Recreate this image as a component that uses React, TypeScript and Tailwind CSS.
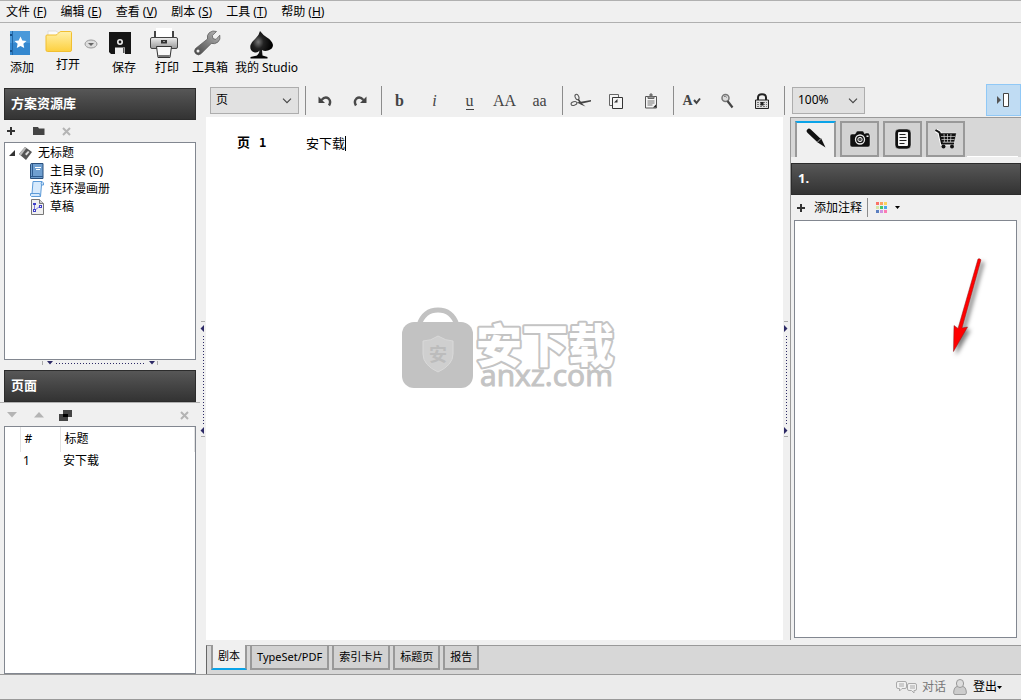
import type { ReactNode } from "react";

const menus = [
    { label: "文件", key: "F" },
    { label: "编辑", key: "E" },
    { label: "查看", key: "V" },
    { label: "剧本", key: "S" },
    { label: "工具", key: "T" },
    { label: "帮助", key: "H" },
];

const views = ["TypeSet/PDF", "索引卡片", "标题页", "报告"];

const swatches = [
    "#fb7268", "#fba35f", "#fbd45f",
    "#d3e6a6", "#45c768", "#4aa6ea",
    "#5b7fc0", "#cf94e2", "#fb7bb4",
];

function BookIcon() {
    return (
        <svg width="22" height="26" viewBox="0 0 22 26">
            <rect x="1" y="1" width="20" height="24" fill="#3588cf" />
            <rect x="1" y="1" width="20" height="12" fill="#4a99da" />
            <path d="M3.500 1v24" stroke="#2268a8" />
            <path d="M1 5h2M1 21h2" stroke="#174f86" strokeWidth="2" />
            <path
                d="M11.500 6.500l1.800 3.900 4.200.5-3.100 2.900.8 4.200-3.700-2.100-3.700 2.100.8-4.200-3.100-2.900 4.200-.5z"
                fill="#fff"
            />
        </svg>
    );
}

function FolderIcon() {
    return (
        <svg width="28" height="24" viewBox="0 0 28 24">
            <defs>
                <linearGradient id="folder" x1="0" y1="0" x2="0" y2="1">
                    <stop offset="0" stopColor="#fff0a8" />
                    <stop offset="1" stopColor="#fdd03f" />
                </linearGradient>
            </defs>
            <path d="M3 2h8l4 3v4H3z" fill="#fbfbfb" stroke="#ddd" />
            <path
                d="M1 7q0-1 1-1h9q1 0 2-1.500L14.500 3q.5-.5 1.500-.5h9.500q1 0 1 1V21q0 1.500-1.500 1.500H2.500Q1 22.500 1 21z"
                fill="url(#folder)"
                stroke="#f1bf31"
            />
        </svg>
    );
}

function SaveIcon() {
    return (
        <svg width="24" height="24" viewBox="0 0 24 24">
            <path d="M1 1h22v22H3l-2-2z" fill="#151515" />
            <circle cx="12" cy="11" r="2.200" fill="none" stroke="#eee" strokeWidth="1.600" />
            <rect x="7" y="16.500" width="10" height="6.500" fill="#eee" />
            <rect x="15" y="17" width="1.500" height="5" fill="#555" />
        </svg>
    );
}

function PrinterIcon() {
    return (
        <svg width="30" height="30" viewBox="0 0 30 30">
            <defs>
                <linearGradient id="printer" x1="0" y1="0" x2="0" y2="1">
                    <stop offset="0" stopColor="#eee" />
                    <stop offset="1" stopColor="#999" />
                </linearGradient>
            </defs>
            <path d="M6 3v8M24 3v8" stroke="#444" strokeWidth="2" />
            <rect x="7" y="0" width="16" height="11" fill="#fff" />
            <rect x="1.500" y="9.500" width="27" height="11" rx="1.500" fill="url(#printer)" stroke="#444" />
            <rect x="12" y="12" width="6" height="3.500" fill="#333" />
            <path d="M14.500 13.500h1" stroke="#fff" />
            <path d="M7.500 18.500h15l-1.500 11H9z" fill="#f8f8f8" stroke="#333" />
            <path d="M9 27h12l-.5 2h-11z" fill="#777" />
        </svg>
    );
}

function WrenchIcon() {
    return (
        <svg width="28" height="26" viewBox="0 0 28 26">
            <defs>
                <linearGradient id="wrench" x1="1" y1="0" x2="0" y2="1">
                    <stop offset="0" stopColor="#bbb" />
                    <stop offset="1" stopColor="#444" />
                </linearGradient>
            </defs>
            <path
                d="M23.500 1.500l-4.200 4.100.7 3 3 .8 3.800-4.200q1.200 4.300-2 7-3.200 2.300-6.500 1.200L8 23.800Q5.500 26 2.800 23.800.3 21.500 2.500 18.500L14.500 9Q13.500 5 16.500 2.500 19.800 0 23.500 1.500z"
                fill="url(#wrench)"
                stroke="#555"
                strokeWidth=".7"
            />
            <circle cx="5" cy="21" r="1.500" fill="#eee" />
        </svg>
    );
}

function SpadeIcon() {
    return (
        <svg width="28" height="28" viewBox="0 0 28 28">
            <defs>
                <radialGradient id="spade" cx=".35" cy=".4" r=".6">
                    <stop offset="0" stopColor="#777" />
                    <stop offset=".4" stopColor="#222" />
                    <stop offset="1" stopColor="#000" />
                </radialGradient>
            </defs>
            <path
                d="M13 0q3 4 7 6.500 5 3 6 7.500 0 4-5 5.500-3.500 1-6-.5l.5 5.500 5 1.500v1.500H3.500V26l6.500-1.500q2.500-2 2.500-5-2 3-6 1.500Q2.500 19 3.500 14q1-3 5-6.500Q12 4.500 13 0z"
                fill="url(#spade)"
            />
        </svg>
    );
}

function ToolButton({ label, className, children }: { label: string; className: string; children: ReactNode }) {
    return (
        <button className={`flex flex-col items-center ${className}`}>
            <span className="flex h-[30px] items-center">{children}</span>
            <span className="whitespace-nowrap leading-[20px]">{label}</span>
        </button>
    );
}

function Toolbar() {
    return (
        <div className="flex h-[57px] shrink-0 items-start pl-1 pt-[5px]">
            <ToolButton label="添加" className="w-9">
                <span className="mr-1">
                    <BookIcon />
                </span>
            </ToolButton>
            <button className="ml-[5px] flex w-[35px] flex-col pt-px" aria-label="打开">
                <FolderIcon />
                <span className="self-end leading-[24px]">打开</span>
            </button>
            <button className="ml-1 mr-[3px] mt-2.5 w-[14px]" aria-label="最近打开">
                <svg width="14" height="12" viewBox="0 0 14 12">
                    <ellipse cx="7" cy="6" rx="6" ry="4" fill="#ddd" stroke="#999" />
                    <path d="M4 5h6L7 8z" fill="#666" />
                </svg>
            </button>
            <ToolButton label="保存" className="ml-[7px] w-8">
                <span className="mr-2">
                    <SaveIcon />
                </span>
            </ToolButton>
            <ToolButton label="打印" className="ml-2.5 w-[34px]">
                <span className="mr-1.5">
                    <PrinterIcon />
                </span>
            </ToolButton>
            <ToolButton label="工具箱" className="ml-2 w-9">
                <span className="mr-1.5">
                    <WrenchIcon />
                </span>
            </ToolButton>
            <ToolButton label="我的 Studio" className="ml-1.5 w-[65px]">
                <span className="mr-3 pt-1">
                    <SpadeIcon />
                </span>
            </ToolButton>
        </div>
    );
}

function PanelHeader({ title }: { title: string }) {
    return (
        <h2 className="flex h-8 shrink-0 items-center border border-[#2c2c2c] bg-linear-to-b from-[#575757] to-[#333] px-1.5 text-[13px] font-bold text-white">
            {title}
        </h2>
    );
}

function PlusIcon() {
    return (
        <svg width="10" height="10" viewBox="0 0 10 10">
            <path d="M5 1v8M1 5h8" stroke="#333" strokeWidth="2" />
        </svg>
    );
}

function CrossIcon() {
    return (
        <svg width="9" height="9" viewBox="0 0 9 9">
            <path d="M1 1l7 7M8 1L1 8" stroke="#b4b4b4" strokeWidth="2" />
        </svg>
    );
}

function HorizontalGrip() {
    return (
        <div className="flex h-[10px] shrink-0 justify-center">
            <svg width="116" height="10" viewBox="0 0 116 10">
                <path d="M.5 1v4M115.500 1v4" stroke="#aaa" />
                <path d="M5 1h6L8 4.500zM107 1h6l-3 3.500z" fill="#2d2a66" />
                <path d="M14 3.500h90" stroke="#2d2a66" strokeDasharray="1 2" />
            </svg>
        </div>
    );
}

function VerticalGrip({ left }: { left?: boolean }) {
    return (
        <svg width="5" height="116" viewBox="0 0 5 116">
            <path d="M1 .5h4M1 115.500h4" stroke="#aaa" />
            {left ? (
                <path d="M4 4v7L.5 7.500zM4 106v7L.5 109.500z" fill="#2d2a66" />
            ) : (
                <path d="M1 4v7l3.500-3.500zM1 106v7l3.500-3.500z" fill="#2d2a66" />
            )}
            <path d="M3.500 15v88" stroke="#2d2a66" strokeDasharray="1 2" />
        </svg>
    );
}

function ProjectTree() {
    return (
        <ul className="min-h-0 flex-[217] border border-[#828790] bg-white pt-px leading-[18px]">
            <li>
                <div className="flex items-center pl-[3px]">
                    <svg width="8" height="8" viewBox="0 0 8 8">
                        <path d="M7 1v6H1z" fill="#333" />
                    </svg>
                    <svg className="ml-[3px] mr-[5px]" width="14" height="14" viewBox="0 0 14 14">
                        <path d="M0 8l6-7 7 5-6 8z" fill="#555" />
                        <path d="M0 8l6-7 1.500 1-5.500 7.500z" fill="#bbb" />
                        <path d="M6 8l3-3 1.500 1-3 3.500z" fill="#ddd" />
                    </svg>
                    无标题
                </div>
                <ul>
                    <li className="flex items-center pl-[25px]">
                        <svg className="mr-1.5" width="14" height="16" viewBox="0 0 14 16">
                            <path d="M.5 1.500q0-1 1.500-1h11v15H.5z" fill="#6f9fd0" stroke="#294f7c" />
                            <path d="M2.500 1v12M1 13.500h12" stroke="#2f5c90" />
                            <path d="M5 4.500h6M6 6.500h4" stroke="#fff" />
                        </svg>
                        主目录 (0)
                    </li>
                    <li className="flex items-center pl-[25px]">
                        <svg className="mr-1.5" width="14" height="16" viewBox="0 0 14 16">
                            <path
                                d="M3 .5h9q2 1 1.500 3.500h-2L10.500 15.500H1.500q-1.500-.5-1-3h1.500z"
                                fill="#d7eafc"
                                stroke="#5d9bd8"
                            />
                            <path d="M11.500 4q-1-2 .5-3.500M2 12.500h7.500l1 3" fill="none" stroke="#5d9bd8" />
                        </svg>
                        连环漫画册
                    </li>
                    <li className="flex items-center pl-[25px]">
                        <svg className="mr-1.5" width="14" height="16" viewBox="0 0 14 16">
                            <path d="M1.500.5h8l4 4v11h-12z" fill="#f0f0f0" stroke="#777" />
                            <path d="M9.500.5v4h4" fill="#ccc" stroke="#777" />
                            <path d="M4.500 4.500v7l5-4h2" fill="none" stroke="#7a7ae0" />
                            <path d="M3 4h3v2H3zM3 10h3v3H3zM9 6h3v3H9z" fill="#4040c8" />
                            <path d="M4 11h1v1H4zM10 7h1v1h-1z" fill="#fff" />
                        </svg>
                        草稿
                    </li>
                </ul>
            </li>
        </ul>
    );
}

function PagesTable() {
    return (
        <div className="min-h-0 flex-[249] border border-[#828790] bg-white">
            <table className="w-full table-fixed border-collapse text-left">
                <thead>
                    <tr className="h-[25px]">
                        <th className="w-[15px] border-r border-[#e3e3e3]" />
                        <th className="w-10 border-r border-[#e3e3e3] pl-1 font-normal">#</th>
                        <th className="border-r border-[#e3e3e3] pl-1 font-normal">标题</th>
                    </tr>
                </thead>
                <tbody>
                    <tr className="h-[18px] leading-[18px]">
                        <td />
                        <td className="pl-[3px]">1</td>
                        <td className="pl-[3px]">安下载</td>
                    </tr>
                </tbody>
            </table>
        </div>
    );
}

function Sidebar() {
    return (
        <aside className="flex w-[196px] shrink-0 flex-col pl-1 pt-2">
            <PanelHeader title="方案资源库" />
            <div className="flex h-[22px] shrink-0 items-center gap-[17px] pl-0.5">
                <button aria-label="新建">
                    <PlusIcon />
                </button>
                <button aria-label="新建文件夹">
                    <svg width="12" height="10" viewBox="0 0 12 10">
                        <path d="M0 1h5l1 1.500h5.500V9H0z" fill="#444" />
                    </svg>
                </button>
                <button aria-label="删除">
                    <CrossIcon />
                </button>
            </div>
            <ProjectTree />
            <HorizontalGrip />
            <PanelHeader title="页面" />
            <div className="-ml-1 -mr-1 flex h-6 shrink-0 items-center border-t border-[#b0b0b0] pl-[7px] pr-[11px] pt-0.5">
                <button aria-label="下移">
                    <svg width="10" height="6" viewBox="0 0 10 6">
                        <path d="M0 0h10L5 5.500z" fill="#b4b4b4" />
                    </svg>
                </button>
                <button className="ml-[17px]" aria-label="上移">
                    <svg width="10" height="6" viewBox="0 0 10 6">
                        <path d="M0 5.500h10L5 0z" fill="#b4b4b4" />
                    </svg>
                </button>
                <button className="ml-[15px]" aria-label="复制页面">
                    <svg width="13" height="11" viewBox="0 0 13 11">
                        <path d="M4 0h9v7H4zM0 4h9v7H0z" fill="#444" />
                        <path d="M4 4h5v3H4z" fill="#000" />
                    </svg>
                </button>
                <button className="ml-auto" aria-label="删除页面">
                    <CrossIcon />
                </button>
            </div>
            <PagesTable />
        </aside>
    );
}

function Select({ label, value, options, className }: { label: string; value: string; options: string[]; className: string }) {
    return (
        <div className={`relative ${className}`}>
            <select
                aria-label={label}
                defaultValue={value}
                className="h-[27px] w-full appearance-none border border-[#adadad] bg-[#e1e1e1] pl-[5px] outline-none"
            >
                {options.map((o) => (
                    <option key={o}>{o}</option>
                ))}
            </select>
            <svg className="pointer-events-none absolute right-[7px] top-[11px]" width="10" height="6" viewBox="0 0 10 6">
                <path d="M1 .7l4 4 4-4" fill="none" stroke="#444" strokeWidth="1.100" />
            </svg>
        </div>
    );
}

function EditButton({ label, children }: { label: string; children: ReactNode }) {
    return (
        <button
            aria-label={label}
            className="flex h-7 w-[35px] shrink-0 items-center justify-center pt-0.5 font-['Liberation_Serif',serif] text-base text-[#444]"
        >
            {children}
        </button>
    );
}

function Separator() {
    return <div className="h-[29px] w-px shrink-0 bg-[#8c8c8c]" />;
}

function EditBar() {
    return (
        <div className="flex h-[37px] shrink-0 items-center pl-1 pt-[3px]">
            <Select label="元素" value="页" options={["页", "面板", "对白"]} className="w-[89px] shrink-0" />
            <div className="w-1.5 shrink-0" />
            <Separator />
            <div className="w-px shrink-0" />
            <EditButton label="撤销">
                <svg width="14" height="12" viewBox="0 0 14 12">
                    <path d="M3.500 5Q7 1 10.500 3.500q3 3 .5 7" fill="none" stroke="#4a4a4a" strokeWidth="2.400" />
                    <path d="M.5 1.500V8H7z" fill="#444" />
                </svg>
            </EditButton>
            <EditButton label="重做">
                <svg width="14" height="12" viewBox="0 0 14 12">
                    <path d="M10.500 5Q7 1 3.500 3.500q-3 3-.5 7" fill="none" stroke="#4a4a4a" strokeWidth="2.400" />
                    <path d="M13.500 1.500V8H7z" fill="#444" />
                </svg>
            </EditButton>
            <div className="w-1 shrink-0" />
            <Separator />
            <EditButton label="粗体">
                <b>b</b>
            </EditButton>
            <EditButton label="斜体">
                <i>i</i>
            </EditButton>
            <EditButton label="下划线">
                <span className="border-b border-[#444] leading-[16px]">u</span>
            </EditButton>
            <EditButton label="大写">AA</EditButton>
            <EditButton label="小写">aa</EditButton>
            <div className="w-[5px] shrink-0" />
            <Separator />
            <EditButton label="剪切">
                <svg width="22" height="16" viewBox="0 0 22 16">
                    <g fill="none" stroke="#555">
                        <ellipse cx="7" cy="4" rx="1.800" ry="2.800" transform="rotate(-25 7 4)" />
                        <ellipse cx="4" cy="10.500" rx="3" ry="1.800" transform="rotate(-15 4 10.500)" />
                    </g>
                    <path d="M7.500 6.500l1.500-.5 3 4.500 3.500 3-5-2z" fill="#444" />
                    <path d="M6.500 9.500L21 7v1.500L10 11z" fill="#444" />
                </svg>
            </EditButton>
            <EditButton label="复制">
                <svg width="14" height="16" viewBox="0 0 14 16">
                    <path d="M.5 1.500h9v11h-9z" fill="#f5f5f5" stroke="#666" />
                    <path d="M3.500 4.500h10v11h-10z" fill="#f5f5f5" stroke="#333" />
                    <path d="M8.500 6v3.500H5z" fill="#333" />
                </svg>
            </EditButton>
            <EditButton label="粘贴">
                <svg width="12" height="16" viewBox="0 0 12 16">
                    <path d="M.5 3.500h11v11.500H.5z" fill="#f5f5f5" stroke="#555" />
                    <path d="M3 3.500h6v2H3zM5 1h2v2H5z" fill="#999" stroke="#666" />
                    <path d="M2.500 8h7M2.500 10h7M2.500 12h5" stroke="#777" />
                    <path d="M8 14.500l3-3v3z" fill="#222" />
                </svg>
            </EditButton>
            <div className="w-[5px] shrink-0" />
            <Separator />
            <EditButton label="拼写检查">
                <b className="text-sm">A</b>
                <svg width="8" height="8" viewBox="0 0 8 8">
                    <path d="M1 3l2.500 3L7 1.500" fill="none" stroke="#444" strokeWidth="2" />
                </svg>
            </EditButton>
            <EditButton label="查找">
                <svg width="14" height="16" viewBox="0 0 14 16">
                    <circle cx="5.500" cy="5" r="3.500" fill="#ddd" stroke="#777" strokeWidth="1.500" />
                    <path d="M4 3.500q2-1 2.500 1" fill="none" stroke="#777" />
                    <path d="M7.500 8l5 6.500" stroke="#444" strokeWidth="2.200" />
                </svg>
            </EditButton>
            <EditButton label="锁定">
                <svg width="14" height="16" viewBox="0 0 14 16">
                    <path d="M3 7V4.500Q3 1.200 7 1.200t4 3.300V7" fill="none" stroke="#222" strokeWidth="2" />
                    <path d="M.5 7h13v8.500H.5z" fill="#ddd" stroke="#222" />
                    <path d="M2 9.500h10M2 11.500h10M2 13.500h10" stroke="#777" strokeDasharray="2 1" />
                    <path d="M5.500 9h3v3.500h-3z" fill="#222" />
                </svg>
            </EditButton>
            <div className="w-[5px] shrink-0" />
            <Separator />
            <Select label="缩放" value="100%" options={["50%", "100%", "200%"]} className="ml-[7px] w-[73px] shrink-0" />
            <button
                aria-label="显示侧栏"
                className="ml-auto flex h-8 w-[35px] shrink-0 items-center justify-center border border-[#90c8f6] bg-[#c0dcf3]"
            >
                <svg width="13" height="14" viewBox="0 0 13 14">
                    <path d="M0 3v8l4-4z" fill="#555" />
                    <path d="M6.500.5h5v13h-5z" fill="#fff" stroke="#444" />
                </svg>
            </button>
        </div>
    );
}

function Watermark() {
    return (
        <svg className="ml-[195px] mt-[152px]" width="220" height="90" viewBox="0 0 220 90">
            <path d="M18 20Q23 5 37 5t19 15" fill="none" stroke="#c2c2c2" strokeWidth="5" />
            <rect x="1" y="17" width="71" height="66" rx="12" fill="#c2c2c2" />
            <path d="M37 31q8 5 15 5v13q0 11-15 18-15-7-15-18V36q8 0 15-5z" fill="#cfcfcf" stroke="#d9d9d9" />
            <text
                x="37"
                y="56"
                textAnchor="middle"
                className="fill-[#bcbcbc] font-['Noto_Sans_CJK_SC',sans-serif] text-[18px] font-bold"
            >
                安
            </text>
            <text
                x="75"
                y="57"
                strokeWidth="4"
                strokeLinejoin="round"
                className="fill-white stroke-[#c4c4c4] font-['Noto_Sans_CJK_SC',sans-serif] text-[46px] font-black [paint-order:stroke]"
            >
                安下载
            </text>
            <text x="79" y="81" className="fill-[#c4c4c4] stroke-[#c4c4c4] font-['Open_Sans',sans-serif] text-[30px]">
                anxz.com
            </text>
        </svg>
    );
}

function ScriptPage() {
    return (
        <main className="min-w-0 flex-1 overflow-hidden bg-white pt-4">
            <p className="flex items-center pl-[31px] font-['Liberation_Serif','Noto_Sans_CJK_SC',serif] text-[13px] leading-5">
                <b className="w-[22px]">页</b>
                <b className="w-[47px] font-['DejaVu_Sans_Mono',monospace] text-xs">1</b>
                <span className="border-r border-black leading-[15px]">安下载</span>
            </p>
            <Watermark />
        </main>
    );
}

function PanelTab({ label, active, children }: { label: string; active?: boolean; children: ReactNode }) {
    return (
        <button
            role="tab"
            aria-label={label}
            aria-selected={!!active}
            className={
                active
                    ? "flex h-9 w-[41px] items-center justify-center border-x-2 border-t-2 border-x-[#999] border-t-[#0aa3e8] bg-[#f0f0f0] pb-1"
                    : "flex h-9 w-[39px] items-center justify-center border-2 border-[#999] bg-[#d2d2d2]"
            }
        >
            {children}
        </button>
    );
}

function NotesPanel() {
    return (
        <aside className="flex w-[231px] shrink-0 flex-col border-l border-t border-[#999]">
            <div role="tablist" className="flex h-[39px] shrink-0 items-end gap-1 bg-[#d7d7d7] pl-1">
                <PanelTab label="注释" active>
                    <svg width="20" height="20" viewBox="0 0 20 20">
                        <path d="M3 3l9.500 9" stroke="#111" strokeWidth="4.600" strokeLinecap="round" />
                        <path d="M11 14l4-4 4.500 9.500z" fill="#111" />
                        <path d="M11 14.500l4-4" stroke="#eee" strokeWidth=".7" />
                    </svg>
                </PanelTab>
                <PanelTab label="图片">
                    <svg width="22" height="18" viewBox="0 0 22 18">
                        <path
                            d="M1 6q0-2 2-2h3l2-3h6l2 3V3h4v1q1 0 1 2v9q0 2-2 2H3q-2 0-2-2z"
                            fill="#111"
                            stroke="#e4e4e4"
                            strokeWidth=".5"
                        />
                        <circle cx="11" cy="9.500" r="4.500" fill="#111" stroke="#eee" strokeWidth="1.300" />
                        <circle cx="11" cy="9.500" r="2.200" fill="#555" stroke="#eee" />
                        <path d="M17.500 5.500h2v1.500h-2z" fill="#eee" />
                    </svg>
                </PanelTab>
                <PanelTab label="文档">
                    <svg width="18" height="20" viewBox="0 0 18 20">
                        <rect x="1" y="0" width="16" height="20" rx="4" fill="#111" stroke="#eee" strokeWidth=".5" />
                        <rect x="4" y="3" width="10" height="14" rx="1" fill="#f5f5f5" />
                        <path d="M5.500 5.500h6M5.500 8.500h7M5.500 11.500h7M5.500 14.500h5" stroke="#222" />
                    </svg>
                </PanelTab>
                <PanelTab label="商店">
                    <svg width="24" height="20" viewBox="0 0 24 20">
                        <path d="M2 1.500l3.500 2L8 14.500h12" fill="none" stroke="#fff" strokeWidth="4" />
                        <path d="M5.500 4H22.500L20.500 13H7.500z" fill="#111" stroke="#fff" strokeWidth=".5" />
                        <path d="M1.500 1l4 2.500L8 14.500h12" fill="none" stroke="#111" strokeWidth="2" />
                        <path d="M7 7.500h14M7.500 10.500h13M10 5l.5 8M13.500 5v8M17 5l-.5 8" stroke="#d2d2d2" strokeWidth=".7" />
                        <circle cx="9.500" cy="17.500" r="2" fill="#111" />
                        <circle cx="18" cy="17.500" r="2" fill="#111" />
                    </svg>
                </PanelTab>
                <div className="-ml-0.5 mr-[3px] h-px flex-1 bg-white" />
            </div>
            <div className="h-1.5 shrink-0" />
            <PanelHeader title="1." />
            <div className="flex h-[25px] shrink-0 items-center pl-[5px]">
                <button className="flex items-center gap-2">
                    <PlusIcon />
                    添加注释
                </button>
                <div className="ml-[5px] h-[19px] w-px bg-[#8c8c8c]" />
                <button aria-label="颜色" className="ml-2 flex items-center gap-[7px]">
                    <svg width="12" height="12" viewBox="0 0 12 12">
                        {swatches.map((c, i) => (
                            <rect key={c} x={(i % 3) * 4} y={Math.floor(i / 3) * 4} width="3" height="3" fill={c} />
                        ))}
                    </svg>
                    <svg width="5" height="3" viewBox="0 0 5 3">
                        <path d="M0 0h5L2.500 3z" fill="#000" />
                    </svg>
                </button>
            </div>
            <div className="mb-0.5 ml-[3px] mr-1 min-h-0 flex-1 overflow-hidden border border-[#828790] bg-white">
                <svg className="ml-auto mr-5 mt-[30px]" width="56" height="110" viewBox="0 0 56 110">
                    <path
                        d="M38 8q1.500-1 3 .8L22 77l5.500-1L13.500 100.500l.5-26 4 3z"
                        fill="#f00"
                        stroke="#8c1a1a"
                        strokeWidth=".5"
                        className="drop-shadow-[3px_3px_2px_rgba(0,0,0,0.5)]"
                    />
                </svg>
            </div>
        </aside>
    );
}

function ViewTabs() {
    return (
        <div
            role="tablist"
            className="flex h-[29px] shrink-0 items-start gap-[3px] border-l border-t border-l-[#666] border-t-[#999] bg-[#d7d7d7] pl-1 text-[11px]"
        >
            <button
                role="tab"
                aria-selected="true"
                className="-mt-px h-[25px] border-x-2 border-b-2 border-x-[#999] border-b-[#0aa3e8] bg-[#f0f0f0] px-[5px]"
            >
                剧本
            </button>
            {views.map((v) => (
                <button
                    key={v}
                    role="tab"
                    aria-selected="false"
                    className="h-6 border-x-2 border-b-2 border-[#999] bg-[#d2d2d2] px-[5px]"
                >
                    {v}
                </button>
            ))}
        </div>
    );
}

function StatusBar() {
    return (
        <footer className="flex h-[26px] shrink-0 items-center justify-end border-y border-[#999] bg-[#ebebeb] pr-[19px]">
            <button className="flex items-center gap-1 text-[#777]">
                <svg width="22" height="14" viewBox="0 0 22 14">
                    <g fill="#f0f0f0" stroke="#aaa">
                        <path d="M2 1.500h7q1.500 0 1.500 1.500v4q0 1.500-1.500 1.500H6L3.500 11V8.500H2Q.5 8.500.5 7V3Q.5 1.500 2 1.500z" />
                        <path d="M13 3.500h6q1.500 0 1.500 1.500v4q0 1.500-1.500 1.500h-1V13l-2.500-2.500H13q-1.500 0-1.500-1.500V5q0-1.500 1.500-1.500z" />
                        <path d="M3 4h5M3 6h5M14 6h5M14 8h5" />
                    </g>
                </svg>
                对话
            </button>
            <button className="ml-[7px] flex items-center">
                <svg className="mr-1.5" width="14" height="16" viewBox="0 0 14 16">
                    <path d="M1.500 15.500Q0 14.500 1 11q.5-3 3-3.500h6q2.500.5 3 3.500 1 3.500-.5 4.500z" fill="#ccc" stroke="#999" />
                    <rect x="3.500" y=".500" width="7" height="8" rx="3.500" fill="#ddd" stroke="#999" />
                </svg>
                登出
                <svg width="5" height="3" viewBox="0 0 5 3">
                    <path d="M0 0h5L2.500 3z" fill="#000" />
                </svg>
            </button>
        </footer>
    );
}

export default function App() {
    return (
        <div className="flex h-screen flex-col overflow-hidden bg-[#f0f0f0] font-['Noto_Sans','Noto_Sans_CJK_SC',sans-serif] text-xs text-black">
            <nav className="flex h-[23px] shrink-0 items-center gap-[14px] border-y border-[#b0b0b0] pl-1.5">
                {menus.map((m) => (
                    <button key={m.key} className="whitespace-nowrap">
                        {m.label} (<u>{m.key}</u>)
                    </button>
                ))}
            </nav>
            <Toolbar />
            <div className="flex min-h-0 flex-1">
                <Sidebar />
                <div className="flex w-[10px] shrink-0 items-center justify-end pr-px pt-1">
                    <VerticalGrip left />
                </div>
                <div className="flex min-w-0 flex-1 flex-col">
                    <EditBar />
                    <div className="flex min-h-0 flex-1">
                        <ScriptPage />
                        <div className="flex w-[7px] shrink-0 items-center">
                            <VerticalGrip />
                        </div>
                        <NotesPanel />
                    </div>
                    <div className="h-[5px] shrink-0" />
                    <ViewTabs />
                </div>
            </div>
            <StatusBar />
        </div>
    );
}
